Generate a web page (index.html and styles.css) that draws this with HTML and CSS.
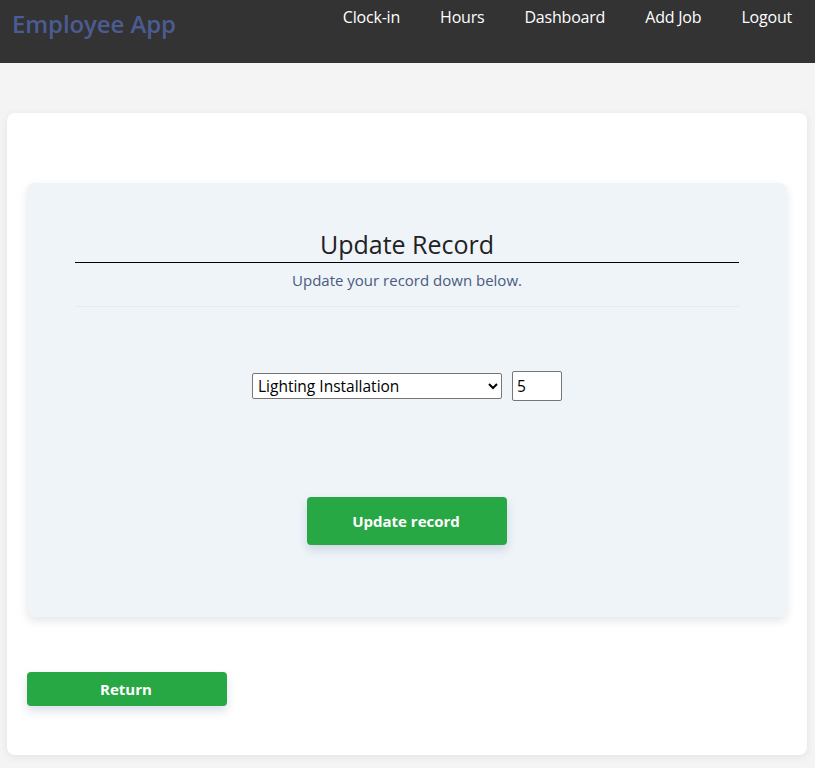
FILE: index.html
```html
<!DOCTYPE html>
<html lang="en">
<head>
<meta charset="utf-8">
<title>Employee App</title>
<link rel="stylesheet" href="styles.css">
</head>
<body>
<header class="topbar">
  <a class="brand" href="#">Employee App</a>
  <nav class="nav">
    <a href="#">Clock-in</a>
    <a href="#">Hours</a>
    <a href="#">Dashboard</a>
    <a href="#">Add Job</a>
    <a href="#">Logout</a>
  </nav>
</header>
<main class="page">
  <div class="card">
    <section class="panel">
      <h1 class="title">Update Record</h1>
      <p class="subtitle">Update your record down below.</p>
      <hr class="divider">
      <form class="form">
        <div class="fields">
          <select class="job">
            <option>Lighting Installation</option>
          </select>
          <input class="qty" type="number" value="5">
        </div>
        <button type="button" class="btn btn-update">Update record</button>
      </form>
    </section>
    <button type="button" class="btn btn-return">Return</button>
  </div>
</main>
</body>
</html>
```
FILE: styles.css
```css
* { box-sizing: border-box; }
html, body { margin: 0; padding: 0; }
body {
  background: #f4f4f4;
  font-family: "Open Sans", "Lato", sans-serif;
  color: #333;
}
.topbar {
  height: 63px;
  background: #333333;
  display: flex;
  justify-content: space-between;
  align-items: flex-start;
  padding: 0 23px 0 12px;
}
.brand {
  color: #4b5c93;
  font-size: 24px;
  font-weight: 600;
  text-decoration: none;
  line-height: 1;
  margin-top: 12px;
  letter-spacing: -0.1px;
}
.nav {
  display: flex;
  gap: 40px;
  margin-top: 7px;
}
.nav a {
  color: #ffffff;
  text-decoration: none;
  font-size: 16px;
  line-height: 20px;
  letter-spacing: -0.2px;
}
.page {
  padding: 50px 8px 13px 7px;
}
.card {
  background: #ffffff;
  border-radius: 8px;
  box-shadow: 0 2px 8px rgba(0,0,0,0.07);
  padding: 70px 20px 49px 20px;
}
.panel {
  background: #eff4f9;
  border-radius: 8px;
  box-shadow: 0 4px 10px rgba(0,0,0,0.1);
  padding: 44px 48px 72px 48px;
  text-align: center;
}
.title {
  margin: 0;
  font-size: 25px;
  font-weight: 400;
  line-height: 34px;
  color: #222;
  border-bottom: 1px solid #000;
  padding-bottom: 1px;
}
.subtitle {
  margin: 6px 0 0 0;
  font-size: 15px;
  line-height: 22px;
  color: #4a5a80;
}
.divider {
  margin: 15px 0 0 0;
  border: 0;
  border-top: 1px solid #e6eaee;
}
.form {
  display: flex;
  flex-direction: column;
  align-items: center;
}
.fields {
  margin-top: 64px;
  display: flex;
  align-items: center;
  gap: 10px;
}
.job {
  width: 250px;
  height: 26px;
  font-family: "Open Sans", sans-serif;
  font-size: 15.5px;
  color: #000;
  background: #fff;
  border: 1px solid #767676;
  border-radius: 2px;
  padding: 0 1px;
}
.qty {
  width: 50px;
  height: 30px;
  font-family: "Open Sans", sans-serif;
  font-size: 15.5px;
  color: #000;
  border: 1px solid #767676;
  border-radius: 2px;
  padding: 0 4px;
}
.btn {
  background: #28a745;
  color: #fff;
  border: 0;
  border-radius: 4px;
  font-family: "Open Sans", sans-serif;
  font-weight: 700;
  font-size: 15px;
  width: 200px;
  box-shadow: 0 5px 10px rgba(60,80,140,0.18);
  cursor: pointer;
}
.btn-update {
  margin-top: 96px;
  height: 48px;
  padding-right: 8px;
}
.btn-return {
  display: block;
  margin-top: 55px;
  height: 34px;
  padding-right: 8px;
}
```
